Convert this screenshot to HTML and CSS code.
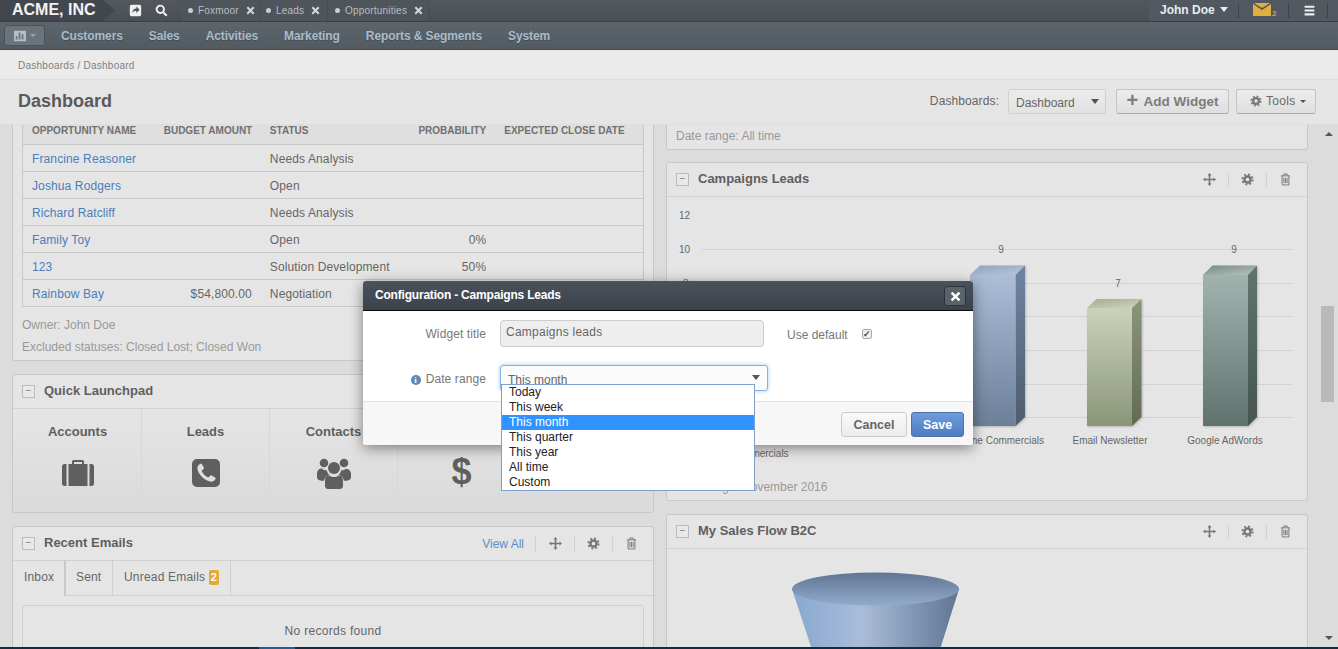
FILE: index.html
```html
<!DOCTYPE html>
<html lang="en">
<head>
    <meta charset="UTF-8" />
    <title>Dashboard - ACME, INC</title>
    <link rel="stylesheet" href="styles.css">
</head>
<body>
    <svg class="sprites" width="0" height="0">
        <symbol id="i-times" viewBox="0 0 16 16"><path d="M3.500 1 8 5.500 12.500 1 15 3.500 10.500 8 15 12.500 12.500 15 8 10.500 3.500 15 1 12.500 5.500 8 1 3.500z"/></symbol>
        <symbol id="i-share" viewBox="0 0 16 16"><path fill-rule="evenodd" d="M3 1h10a2 2 0 0 1 2 2v10a2 2 0 0 1-2 2H3a2 2 0 0 1-2-2V3a2 2 0 0 1 2-2zM9 3v2.500C6 5.500 4 7.500 4 11.500c1-2.500 2.500-3.300 5-3.300V11l4-4z"/></symbol>
        <symbol id="i-search" viewBox="0 0 16 16"><circle cx="6.500" cy="6.500" r="4.500" fill="none" stroke="currentColor" stroke-width="2.400"/><path d="M9.500 11.300l1.800-1.800 4 4-1.800 1.800z"/></symbol>
        <symbol id="i-bars" viewBox="0 0 16 16"><path d="M2 2h12v2.600H2zM2 6.700h12v2.600H2zM2 11.400h12V14H2z"/></symbol>
        <symbol id="i-cog" viewBox="0 0 16 16"><circle cx="8" cy="8" r="3.800" fill="none" stroke="currentColor" stroke-width="3"/><circle cx="8" cy="8" r="6.200" fill="none" stroke="currentColor" stroke-width="2.400" stroke-dasharray="2.400 2.470"/></symbol>
        <symbol id="i-move" viewBox="0 0 16 16"><path d="M8 0l2.500 3H9v4h4V5.500L16 8l-3 2.500V9H9v4h1.500L8 16l-2.500-3H7V9H3v1.500L0 8l3-2.500V7h4V3H5.500z"/></symbol>
        <symbol id="i-trash" viewBox="0 0 16 16"><path d="M2.500 3.500h11M6 3.200V1.200h4v2" fill="none" stroke="currentColor" stroke-width="1.200"/><path d="M3.800 3.500v11.200h8.400V3.500M6 6v6.500M8 6v6.500M10 6v6.500" fill="none" stroke="currentColor" stroke-width="1.200"/></symbol>
        <symbol id="i-briefcase" viewBox="0 0 32 28"><path d="M10 5V2.500C10 1.500 11 1 12 1h8c1 0 2 .5 2 1.500V5h-2V3h-8v2z"/><path d="M2.500 5h2v22h-2C1 27 0 26 0 24.500v-17C0 6 1 5 2.500 5zM6.500 5h19v22h-19zM27.500 5h2C31 5 32 6 32 7.500v17c0 1.500-1 2.500-2.500 2.500h-2z"/></symbol>
        <symbol id="i-phone" viewBox="0 0 28 28"><path fill-rule="evenodd" d="M5 0h18a5 5 0 0 1 5 5v18a5 5 0 0 1-5 5H5a5 5 0 0 1-5-5V5a5 5 0 0 1 5-5zM8 5C6 6 5 8 5.500 10.500 7 16 12 21 18 22.500c2.500.5 4.500-.5 5.500-2.500.3-.7.2-1.200-.4-1.600l-3.500-2c-.6-.3-1.100-.2-1.500.3l-1.200 1.400c-.4.4-.8.4-1.300.2-2.500-1.200-4.500-3.200-5.700-5.700-.2-.5-.2-.9.200-1.300l1.400-1.200c.5-.4.6-.9.300-1.500l-2-3.500C9.300 4.900 8.700 4.700 8 5z"/></symbol>
        <symbol id="i-group" viewBox="0 0 34 32"><circle cx="7" cy="6" r="4.300"/><circle cx="27" cy="6" r="4.300"/><circle cx="17" cy="11" r="6"/><path d="M5 11.500c1 1.500 3 2 4.800 1.700.4 2 1.300 3.500 2.700 4.500-3 1-5 3-5.500 6-3 0-7-.5-7-3.500v-3C0 13.500 2 11.500 5 11.500zM29 11.500c-1 1.500-3 2-4.800 1.700-.4 2-1.300 3.500-2.700 4.500 3 1 5 3 5.500 6 3 0 7-.5 7-3.500v-3c0-3.200-2-5.200-5-5.200zM12.500 18.500c1.300 1 2.800 1.500 4.500 1.500s3.200-.5 4.500-1.500c3.300.3 4.500 2.500 4.500 5.500v5c0 2-1.500 3-3 3H11c-1.500 0-3-1-3-3v-5c0-3 1.200-5.200 4.500-5.500z"/></symbol>
        <symbol id="i-chart" viewBox="0 0 16 14"><path fill-rule="evenodd" d="M1 1h14v12H1zM3 7v4h2V7zM6.500 3v8h2V3zM10 5v6h2V5z"/></symbol>
    </svg>

    <div class="topbar">
        <div class="brand">ACME, INC</div>
        <div class="top-tools">
            <svg class="top-icon"><use href="#i-share"/></svg>
            <svg class="top-icon"><use href="#i-search"/></svg>
        </div>
        <div class="top-tab"><span class="dot"></span>Foxmoor<svg class="tab-x"><use href="#i-times"/></svg></div>
        <div class="top-tab"><span class="dot"></span>Leads<svg class="tab-x"><use href="#i-times"/></svg></div>
        <div class="top-tab"><span class="dot"></span>Opportunities<svg class="tab-x"><use href="#i-times"/></svg></div>
        <div class="top-right">
            <div class="user">John Doe<span class="caret"></span></div>
            <div class="mail">
                <svg width="18" height="13" viewBox="0 0 18 13"><path fill="#e2ae3c" d="M0 1l9 6 9-6v12H0z"/><path fill="#e2ae3c" d="M1 0h16L9 5z"/></svg>
                <span class="mail-count">2</span>
            </div>
            <div class="menu"><svg class="top-icon"><use href="#i-bars"/></svg></div>
        </div>
    </div>

    <div class="mainnav">
        <button class="nav-btn"><svg class="nav-chart"><use href="#i-chart"/></svg><span class="caret small"></span></button>
        <a class="nav-link">Customers</a>
        <a class="nav-link">Sales</a>
        <a class="nav-link">Activities</a>
        <a class="nav-link">Marketing</a>
        <a class="nav-link">Reports &amp; Segments</a>
        <a class="nav-link">System</a>
    </div>

    <div class="breadcrumb">Dashboards / Dashboard</div>

    <div class="titlebar">
        <h1>Dashboard</h1>
        <div class="title-actions">
            <span class="dash-label">Dashboards:</span>
            <div class="dash-select">Dashboard<span class="caret dark"></span></div>
            <button class="btn-add"><span class="plus">+</span> Add Widget</button>
            <button class="btn-tools"><svg class="btn-cog"><use href="#i-cog"/></svg>Tools<span class="caret dark tiny"></span></button>
        </div>
    </div>

    <div class="content">
        <div class="columns">
            <div class="col">
                <div class="widget cut">
                    <table class="opp-table">
                        <colgroup><col class="c1"><col class="c2"><col class="c3"><col class="c4"><col class="c5"></colgroup>
                        <thead>
                            <tr><th>Opportunity name</th><th>Budget amount</th><th>Status</th><th class="num">Probability</th><th>Expected close date</th></tr>
                        </thead>
                        <tbody>
                            <tr><td><a>Francine Reasoner</a></td><td></td><td>Needs Analysis</td><td></td><td></td></tr>
                            <tr><td><a>Joshua Rodgers</a></td><td></td><td>Open</td><td></td><td></td></tr>
                            <tr><td><a>Richard Ratcliff</a></td><td></td><td>Needs Analysis</td><td></td><td></td></tr>
                            <tr><td><a>Family Toy</a></td><td></td><td>Open</td><td class="num">0%</td><td></td></tr>
                            <tr><td><a>123</a></td><td></td><td>Solution Development</td><td class="num">50%</td><td></td></tr>
                            <tr><td><a>Rainbow Bay</a></td><td class="num">$54,800.00</td><td>Negotiation</td><td></td><td></td></tr>
                        </tbody>
                    </table>
                    <p class="note first">Owner: John Doe</p>
                    <p class="note">Excluded statuses: Closed Lost; Closed Won</p>
                </div>

                <div class="widget">
                    <div class="widget-head">
                        <span class="collapse">&minus;</span>
                        <h3>Quick Launchpad</h3>
                    </div>
                    <div class="launchpad">
                        <div class="launch"><b>Accounts</b><svg class="li-case"><use href="#i-briefcase"/></svg></div>
                        <div class="launch"><b>Leads</b><svg class="li-phone"><use href="#i-phone"/></svg></div>
                        <div class="launch"><b>Contacts</b><svg class="li-group"><use href="#i-group"/></svg></div>
                        <div class="launch"><b>Sales</b><span class="li-dollar">$</span></div>
                        <div class="launch last"></div>
                    </div>
                </div>

                <div class="widget grow">
                    <div class="widget-head">
                        <span class="collapse">&minus;</span>
                        <h3>Recent Emails</h3>
                        <div class="head-tools">
                            <a class="view-all">View All</a>
                            <span class="tool-sep first"></span>
                            <svg class="tool"><use href="#i-move"/></svg>
                            <span class="tool-sep"></span>
                            <svg class="tool"><use href="#i-cog"/></svg>
                            <span class="tool-sep"></span>
                            <svg class="tool"><use href="#i-trash"/></svg>
                        </div>
                    </div>
                    <div class="tabs">
                        <div class="tab active">Inbox</div>
                        <div class="tab">Sent</div>
                        <div class="tab">Unread Emails <span class="badge">2</span></div>
                    </div>
                    <div class="empty">No records found</div>
                </div>
            </div>

            <div class="col">
                <div class="widget cut stub">
                    <p class="note">Date range: All time</p>
                </div>

                <div class="widget">
                    <div class="widget-head">
                        <span class="collapse">&minus;</span>
                        <h3>Campaigns Leads</h3>
                        <div class="head-tools">
                            <svg class="tool"><use href="#i-move"/></svg>
                            <span class="tool-sep"></span>
                            <svg class="tool"><use href="#i-cog"/></svg>
                            <span class="tool-sep"></span>
                            <svg class="tool"><use href="#i-trash"/></svg>
                        </div>
                    </div>
                    <svg class="chart" viewBox="667 197 640 273">
                        <defs>
                            <linearGradient id="blue-f" x1="0" y1="0" x2="0" y2="1"><stop offset="0" stop-color="#abbdd7"/><stop offset="1" stop-color="#6b7f99"/></linearGradient>
                            <linearGradient id="blue-s" x1="0" y1="0" x2="0" y2="1"><stop offset="0" stop-color="#6d84a2"/><stop offset="1" stop-color="#4f5c6c"/></linearGradient>
                            <linearGradient id="blue-t" x1="0" y1="0" x2="1" y2="1"><stop offset="0" stop-color="#8da2bf"/><stop offset="1" stop-color="#b9c7da"/></linearGradient>
                            <linearGradient id="green-f" x1="0" y1="0" x2="0" y2="1"><stop offset="0" stop-color="#cad3b9"/><stop offset="1" stop-color="#8b9578"/></linearGradient>
                            <linearGradient id="green-s" x1="0" y1="0" x2="0" y2="1"><stop offset="0" stop-color="#8c967a"/><stop offset="1" stop-color="#626a55"/></linearGradient>
                            <linearGradient id="green-t" x1="0" y1="0" x2="1" y2="1"><stop offset="0" stop-color="#a3ad90"/><stop offset="1" stop-color="#ced6bf"/></linearGradient>
                            <linearGradient id="teal-f" x1="0" y1="0" x2="0" y2="1"><stop offset="0" stop-color="#a1b3ae"/><stop offset="1" stop-color="#5f726e"/></linearGradient>
                            <linearGradient id="teal-s" x1="0" y1="0" x2="0" y2="1"><stop offset="0" stop-color="#5f7570"/><stop offset="1" stop-color="#465451"/></linearGradient>
                            <linearGradient id="teal-t" x1="0" y1="0" x2="1" y2="1"><stop offset="0" stop-color="#76897f"/><stop offset="1" stop-color="#b7c4bf"/></linearGradient>
                        </defs>
                        <g class="grid">
                            <path d="M702 249.500H1293M702 283.500H1293M702 316.500H1293M702 350.500H1293M702 384.500H1293M702 417.500H1293"/>
                        </g>
                        <g class="axis">
                            <text x="679" y="219">12</text>
                            <text x="679" y="253">10</text>
                            <text x="683" y="287">8</text>
                        </g>
                        <g class="bar">
                            <path fill="url(#blue-t)" d="M970 275l10-9.500h46l-10 9.500z"/>
                            <path fill="url(#blue-s)" d="M1015.500 275l9.500-9.500V417l-9.500 9z"/>
                            <rect fill="url(#blue-f)" x="970" y="275" width="45.500" height="151"/>
                        </g>
                        <g class="bar">
                            <path fill="url(#green-t)" d="M1087 308l9.500-9h45.500l-9.500 9z"/>
                            <path fill="url(#green-s)" d="M1132 308l9.500-9v118l-9.500 9z"/>
                            <rect fill="url(#green-f)" x="1087" y="308" width="45" height="118"/>
                        </g>
                        <g class="bar">
                            <path fill="url(#teal-t)" d="M1203 275l9.500-9.500H1257l-9 9.500z"/>
                            <path fill="url(#teal-s)" d="M1248 275l9-9.500V417l-9 9z"/>
                            <rect fill="url(#teal-f)" x="1203" y="275" width="45" height="151"/>
                        </g>
                        <g class="values">
                            <text x="1001" y="253">9</text>
                            <text x="1118" y="287">7</text>
                            <text x="1234" y="253">9</text>
                        </g>
                        <g class="labels">
                            <text x="999" y="444">Online Commercials</text>
                            <text x="1110" y="444">Email Newsletter</text>
                            <text x="1225" y="444">Google AdWords</text>
                            <text x="745" y="457">Radio Commercials</text>
                        </g>
                    </svg>
                    <p class="note chart-note">Date range: November 2016</p>
                </div>

                <div class="widget grow">
                    <div class="widget-head">
                        <span class="collapse">&minus;</span>
                        <h3>My Sales Flow B2C</h3>
                        <div class="head-tools">
                            <svg class="tool"><use href="#i-move"/></svg>
                            <span class="tool-sep"></span>
                            <svg class="tool"><use href="#i-cog"/></svg>
                            <span class="tool-sep"></span>
                            <svg class="tool"><use href="#i-trash"/></svg>
                        </div>
                    </div>
                    <svg class="funnel" viewBox="667 549 640 100">
                        <defs>
                            <linearGradient id="fun-body"><stop offset="0" stop-color="#88a7cf"/><stop offset=".42" stop-color="#a9bdd9"/><stop offset="1" stop-color="#5f7591"/></linearGradient>
                            <linearGradient id="fun-top" x1="0" y1="0" x2="0" y2="1"><stop offset="0" stop-color="#5f7592"/><stop offset="1" stop-color="#93abcb"/></linearGradient>
                        </defs>
                        <path fill="url(#fun-body)" d="M792 589l23 70h122l22-70z"/>
                        <ellipse fill="url(#fun-top)" cx="875.500" cy="589" rx="83.500" ry="16.500"/>
                    </svg>
                </div>
            </div>
        </div>

        <div class="scrollbar">
            <span class="arrow up"></span>
            <span class="thumb"></span>
            <span class="arrow down"></span>
        </div>
    </div>

    <div class="taskbar"><span class="task-active"></span></div>

    <div class="modal">
        <div class="modal-head">
            <span class="modal-title">Configuration - Campaigns Leads</span>
            <button class="modal-close"><svg><use href="#i-times"/></svg></button>
        </div>
        <div class="modal-body">
            <div class="form-row row-title">
                <label>Widget title</label>
                <input class="title-input" value="Campaigns leads" readonly>
                <span class="use-default">Use default</span>
                <span class="check">&#10003;</span>
            </div>
            <div class="form-row row-range">
                <label><span class="info">i</span>Date range</label>
                <div class="range-select">This month<span class="caret dark"></span></div>
            </div>
        </div>
        <div class="modal-foot">
            <button class="btn-cancel">Cancel</button>
            <button class="btn-save">Save</button>
        </div>
        <ul class="options">
            <li>Today</li>
            <li>This week</li>
            <li class="selected">This month</li>
            <li>This quarter</li>
            <li>This year</li>
            <li>All time</li>
            <li>Custom</li>
        </ul>
    </div>
</body>
</html>
```

FILE: styles.css
```css
* {
    box-sizing: border-box;
}
html, body {
    height: 649px;
}
body {
    margin: 0;
    display: flex;
    flex-direction: column;
    overflow: hidden;
    position: relative;
    font-family: "Liberation Sans", Arial, sans-serif;
    font-size: 12px;
    color: #666;
    background: #e5e5e5;
}
h1, h3, p, ul {
    margin: 0;
    padding: 0;
}
a {
    color: #4a7ebb;
}
button {
    font-family: inherit;
}
.sprites {
    position: absolute;
}
svg {
    fill: currentColor;
}

/* carets */
.caret {
    display: inline-block;
    width: 0;
    height: 0;
    margin-left: 5px;
    vertical-align: 2px;
    border-left: 4px solid transparent;
    border-right: 4px solid transparent;
    border-top: 5px solid #e8ecee;
}
.caret.small {
    border-left-width: 3px;
    border-right-width: 3px;
    border-top: 3px solid #98a5ae;
    margin-left: 3px;
}
.caret.dark {
    border-top-color: #555;
}
.caret.tiny {
    border-left-width: 3px;
    border-right-width: 3px;
    border-top-width: 3px;
    margin-left: 4px;
}

/* top bar */
.topbar {
    height: 22px;
    flex: none;
    display: flex;
    align-items: center;
    background: linear-gradient(#53585f, #4a4f56);
    border-bottom: 1px solid #3b4046;
    color: #fff;
}
.brand {
    width: 115px;
    height: 21px;
    padding-left: 12px;
    font-size: 16px;
    font-weight: bold;
    line-height: 20px;
    background: #42474e;
    clip-path: polygon(0 0, 103px 0, 115px 50%, 103px 100%, 0 100%);
    color: #f2f2f2;
}
.top-tools {
    width: 67px;
    height: 21px;
    display: flex;
    align-items: center;
    gap: 13px;
    padding-left: 14px;
}
.top-icon {
    width: 13px;
    height: 13px;
    color: #f0f0f0;
}
.top-tab {
    height: 21px;
    display: flex;
    align-items: center;
    padding-left: 6px;
    font-size: 10px;
    letter-spacing: .2px;
    color: #b7bec4;
    background: #50555c;
    border-right: 1px solid #484d53;
}
.top-tab:nth-child(3) {
    width: 78px;
}
.top-tab:nth-child(4) {
    width: 68px;
}
.top-tab:nth-child(5) {
    width: 101px;
    padding-left: 7px;
}
.dot {
    width: 5px;
    height: 5px;
    margin-right: 5px;
    border-radius: 50%;
    background: #c9ced2;
}
.tab-x {
    width: 9px;
    height: 9px;
    margin-left: 7px;
    color: #d4d8db;
}
.top-right {
    margin-left: auto;
    height: 21px;
    display: flex;
    align-items: center;
    width: 189px;
    background: #52585f;
}
.user {
    width: 90px;
    padding-left: 11px;
    font-size: 12px;
    font-weight: bold;
    color: #e8ecee;
    border-right: 1px solid #3f444a;
    height: 15px;
    line-height: 15px;
}
.mail {
    width: 50px;
    height: 15px;
    padding-left: 14px;
    display: flex;
    border-right: 1px solid #3f444a;
}
.mail-count {
    font-size: 8px;
    font-weight: bold;
    color: #d0a240;
    margin: 6px 0 0 1px;
}
.menu {
    width: 39px;
    height: 15px;
    padding-left: 14px;
    border-right: 1px solid #3f444a;
    display: flex;
    align-items: center;
}

/* main navigation */
.mainnav {
    height: 28px;
    flex: none;
    display: flex;
    align-items: center;
    padding-left: 4px;
    background: linear-gradient(#5c656c, #535b62);
    border-bottom: 1px solid #40474d;
}
.nav-btn {
    width: 41px;
    height: 21px;
    margin-right: 16px;
    padding: 0;
    border: 1px solid #4a5157;
    border-radius: 3px;
    background: #6b747b;
    display: flex;
    align-items: center;
    justify-content: center;
}
.nav-chart {
    width: 14px;
    height: 12px;
    color: #b4bec5;
}
.nav-link {
    font-size: 12px;
    font-weight: bold;
    letter-spacing: -.1px;
    color: #a8bccb;
    text-shadow: 0 1px 0 #454c52;
    margin-right: 26px;
}

/* page header */
.breadcrumb {
    height: 30px;
    flex: none;
    padding: 1px 0 0 18px;
    line-height: 29px;
    font-size: 10px;
    letter-spacing: .25px;
    color: #808080;
    background: #ebebeb;
    border-bottom: 1px solid #dfdfdf;
}
.titlebar {
    height: 45px;
    flex: none;
    display: flex;
    align-items: center;
    padding: 0 22px 2px 18px;
    background: #e5e5e5;
    border-bottom: 1px solid #dedede;
}
.titlebar h1 {
    font-size: 18px;
    color: #5a5a5a;
}
.title-actions {
    margin-left: auto;
    display: flex;
    align-items: center;
}
.dash-label {
    font-size: 12px;
    letter-spacing: .1px;
    margin-right: 9px;
    color: #666;
}
.dash-select {
    width: 98px;
    height: 25px;
    padding: 6px 0 0 7px;
    margin-right: 10px;
    border: 1px solid #d0d0d0;
    border-radius: 3px;
    background: linear-gradient(#ececec, #e2e2e2);
    color: #666;
    position: relative;
}
.dash-select .caret {
    position: absolute;
    right: 6px;
    top: 9px;
    margin: 0;
}
.btn-add, .btn-tools {
    height: 25px;
    padding: 0;
    border: 1px solid #c4c4c4;
    border-bottom-color: #aaa;
    border-radius: 3px;
    background: linear-gradient(#ececec, #dfdfdf);
    color: #7c7c7c;
}
.btn-add {
    width: 113px;
    margin-right: 7px;
    font-size: 13.500px;
    font-weight: bold;
}
.plus {
    font-size: 20px;
    line-height: 14px;
    vertical-align: -1px;
    margin-right: 2px;
}
.btn-tools {
    width: 80px;
    font-size: 12px;
    letter-spacing: .3px;
    color: #6a6a6a;
    display: flex;
    align-items: center;
    padding-left: 13px;
}
.btn-cog {
    width: 12px;
    height: 12px;
    margin-right: 4px;
    color: #777;
}

/* content */
.content {
    flex: 1;
    min-height: 0;
    display: flex;
    overflow: hidden;
    background: #dcdcdc;
}
.columns {
    width: 1320px;
    display: flex;
    gap: 12px;
    padding: 0 12px;
}
.col {
    width: 642px;
    display: flex;
    flex-direction: column;
    gap: 13px;
}
.widget {
    flex: none;
    background: #e5e5e5;
    border: 1px solid #c8c8c8;
    border-radius: 3px;
}
.widget.cut {
    border-top: 0;
    border-radius: 0 0 3px 3px;
    height: 236px;
    padding: 0 9px;
}
.widget.stub {
    height: 25px;
    margin-bottom: -1px;
}
.widget.stub .note {
    line-height: 22px;
}
.widget.grow {
    flex: 1;
    min-height: 0;
    overflow: hidden;
    border-bottom: 0;
    border-radius: 3px 3px 0 0;
}
.widget-head {
    height: 34px;
    display: flex;
    align-items: center;
    padding: 0 15px 0 9px;
    border-bottom: 1px solid #d0d0d0;
}
.widget-head h3 {
    font-size: 13px;
    padding-bottom: 2px;
    color: #5f5f5f;
}
.collapse {
    width: 13px;
    height: 13px;
    margin-right: 9px;
    border: 1px solid #bbb;
    background: #e9e9e9;
    font-size: 10px;
    line-height: 10px;
    text-align: center;
    color: #777;
}
.head-tools {
    margin-left: auto;
    display: flex;
    align-items: center;
    color: #777;
}
.view-all {
    font-size: 12px;
    color: #5f8cc5;
}
.tool {
    width: 13px;
    height: 13px;
}
.tool-sep {
    width: 1px;
    height: 14px;
    margin: 0 12px;
    background: #d0d0d0;
}
.tool-sep.first {
    margin: 0 13px 0 11px;
}

/* opportunity table */
.opp-table {
    width: 622px;
    table-layout: fixed;
    border-collapse: collapse;
    border: 1px solid #c8c8c8;
    border-top: 0;
    font-size: 12px;
}
.c1 { width: 132px; }
.c2 { width: 106px; }
.c3 { width: 148px; }
.c4 { width: 86px; }
.c5 { width: 148px; }
.opp-table th {
    height: 19px;
    padding: 0 0 0 9px;
    font-size: 10px;
    text-align: left;
    text-transform: uppercase;
    white-space: nowrap;
    color: #707070;
    background: #dfdfdf;
    vertical-align: top;
    line-height: 12px;
    border-bottom: 1px solid #c8c8c8;
}
.opp-table td {
    height: 27px;
    padding: 3px 9px 0;
    white-space: nowrap;
    letter-spacing: .12px;
    border-bottom: 1px solid #c8c8c8;
}
.opp-table .num {
    text-align: right;
    padding-right: 9px;
}
.note {
    font-size: 12px;
    color: #999;
    height: 22px;
    line-height: 22px;
}
.note.first {
    margin-top: 7px;
}

/* launchpad */
.launchpad {
    height: 103px;
    display: flex;
    padding-left: 1px;
    background: linear-gradient(#e5e5e5, #dadada);
    border-radius: 0 0 3px 3px;
}
.launch {
    width: 128px;
    padding-top: 15px;
    display: flex;
    flex-direction: column;
    align-items: center;
    border-right: 1px solid #d8d8d8;
}
.launch b {
    font-size: 13px;
    color: #5f5f5f;
    height: 29px;
}
.launch.last {
    flex: 1;
    border: 0;
}
.launch svg {
    color: #5f5f5f;
}
.li-case {
    width: 32px;
    height: 28px;
    margin-top: 6px;
}
.li-phone {
    width: 28px;
    height: 28px;
    margin-top: 6px;
}
.li-group {
    width: 34px;
    height: 32px;
    margin-top: 4px;
}
.li-dollar {
    font-size: 36px;
    font-weight: bold;
    line-height: 34px;
    margin-top: 2px;
    color: #5f5f5f;
}

/* emails */
.tabs {
    height: 35px;
    display: flex;
    border-bottom: 1px solid #cfcfcf;
}
.tab {
    padding: 0 10px;
    line-height: 33px;
    letter-spacing: .15px;
    border-right: 1px solid #cfcfcf;
    color: #666;
}
.tab:nth-child(2) {
    width: 47px;
}
.tab:nth-child(3) {
    width: 118px;
    padding-left: 11px;
    letter-spacing: .2px;
}
.tab.active {
    height: 35px;
    width: 53px;
    padding-left: 11px;
    background: #e5e5e5;
    border-right: 2px solid #c8c8c8;
}
.badge {
    display: inline-block;
    width: 10px;
    height: 15px;
    border-radius: 2px;
    background: #e5a83b;
    color: #fff;
    font-size: 11px;
    font-weight: bold;
    line-height: 15px;
    text-align: center;
}
.empty {
    margin: 9px 9px 0;
    height: 60px;
    padding-top: 18px;
    text-align: center;
    letter-spacing: .3px;
    border: 1px solid #d0d0d0;
    border-radius: 3px 3px 0 0;
}

/* charts */
.chart {
    display: block;
    width: 640px;
    height: 273px;
    overflow: hidden;
}
.grid path {
    fill: none;
    stroke: #d3d3d3;
}
.axis text, .values text {
    font-size: 10px;
    fill: #666;
}
.values text {
    text-anchor: middle;
}
.labels text {
    font-size: 10px;
    fill: #666;
    text-anchor: middle;
}
.bar {
    filter: drop-shadow(1px 1px 1px rgba(0, 0, 0, .2));
}
.chart-note {
    padding-left: 9px;
    height: 30px;
    line-height: 35px;
}
.funnel {
    display: block;
    width: 640px;
    height: 100px;
}

/* scrollbar */
.scrollbar {
    width: 18px;
    position: relative;
    background: #dcdcdc;
    display: flex;
    flex-direction: column;
    align-items: center;
}
.arrow {
    width: 0;
    height: 0;
    border-left: 4px solid transparent;
    border-right: 4px solid transparent;
}
.arrow.up {
    margin-top: 7px;
    border-bottom: 4px solid #555;
}
.arrow.down {
    margin-top: auto;
    margin-bottom: 7px;
    border-top: 4px solid #555;
}
.thumb {
    position: absolute;
    top: 181px;
    left: 1px;
    width: 13px;
    height: 96px;
    background: #b9b9b9;
}

.taskbar {
    height: 2px;
    flex: none;
    background: #122c44;
    padding-left: 259px;
}
.task-active {
    display: block;
    width: 36px;
    height: 2px;
    background: #1c5f9e;
}

/* modal */
.modal {
    position: absolute;
    left: 363px;
    top: 281px;
    width: 610px;
    height: 164px;
    display: flex;
    flex-direction: column;
    background: #fff;
    border-radius: 3px;
    box-shadow: 0 3px 14px rgba(0, 0, 0, .45);
}
.modal-head {
    height: 30px;
    flex: none;
    display: flex;
    align-items: center;
    justify-content: space-between;
    padding: 0 7px 0 12px;
    font-weight: bold;
    color: #fff;
    background: linear-gradient(#4a525c, #3b424b);
    border-bottom: 1px solid #0c0c0c;
    border-radius: 3px 3px 0 0;
}
.modal-title {
    letter-spacing: -.2px;
    padding-bottom: 2px;
}
.modal-close {
    width: 22px;
    height: 20px;
    padding: 4px 5px;
    border: 1px solid #2d333a;
    border-radius: 3px;
    background: #5a626c;
    color: #fff;
}
.modal-close svg {
    display: block;
    width: 11px;
    height: 11px;
}
.modal-body {
    flex: 1;
    padding: 9px 0 0;
    color: #777;
}
.form-row {
    display: flex;
    align-items: center;
}
.form-row label {
    width: 123px;
    margin-right: 14px;
    text-align: right;
    letter-spacing: .1px;
    color: #777;
}
.row-range label {
    padding-top: 2px;
}
.row-title {
    height: 27px;
    margin-bottom: 18px;
}
.title-input {
    width: 264px;
    height: 27px;
    padding: 0 5px 3px;
    border: 1px solid #ccc;
    border-radius: 4px;
    background: #eee;
    font: 12px "Liberation Sans", Arial, sans-serif;
    letter-spacing: .25px;
    color: #666;
}
.use-default {
    margin: 3px 0 0 23px;
    color: #777;
}
.check {
    width: 10px;
    height: 10px;
    margin: 1px 0 0 14px;
    border: 1px solid #aaa;
    border-radius: 2px;
    font-size: 9px;
    font-weight: bold;
    line-height: 8px;
    color: #444;
    background: #eee;
}
.info {
    display: inline-block;
    width: 10px;
    height: 10px;
    margin-right: 5px;
    border-radius: 50%;
    background: #5f86b8;
    color: #fff;
    font-family: "Liberation Serif", serif;
    font-size: 9px;
    font-weight: bold;
    line-height: 10px;
    text-align: center;
}
.row-range {
    height: 26px;
}
.range-select {
    width: 268px;
    height: 26px;
    padding: 7px 0 0 7px;
    border: 1px solid #7fb3e6;
    border-radius: 3px;
    background: #fbfbfb;
    box-shadow: 0 0 4px rgba(100, 170, 240, .6);
    color: #666;
    position: relative;
}
.range-select .caret {
    position: absolute;
    right: 7px;
    top: 9px;
    margin: 0;
}
.modal-foot {
    height: 44px;
    flex: none;
    display: flex;
    justify-content: flex-end;
    gap: 4px;
    padding: 10px 9px 0 0;
    background: #f7f7f7;
    border-top: 1px solid #e2e2e2;
    border-radius: 0 0 3px 3px;
}
.btn-cancel, .btn-save {
    height: 25px;
    padding: 0;
    border-radius: 3px;
    font-size: 12.500px;
    font-weight: bold;
}
.btn-cancel {
    width: 66px;
    border: 1px solid #ccc;
    background: linear-gradient(#fafafa, #ececec);
    color: #666;
}
.btn-save {
    width: 53px;
    border: 1px solid #4a72ad;
    background: linear-gradient(#6e9bdc, #4f7cc0);
    color: #fff;
}
.options {
    position: absolute;
    left: 138px;
    top: 103px;
    width: 254px;
    height: 107px;
    list-style: none;
    padding: 0;
    background: #fff;
    border: 1px solid #7f9fd0;
    color: #222;
    font-size: 12px;
}
.options li {
    height: 15px;
    padding-left: 7px;
    line-height: 15px;
}
.options .selected {
    background: #3093ff;
    color: #fff;
}
```
